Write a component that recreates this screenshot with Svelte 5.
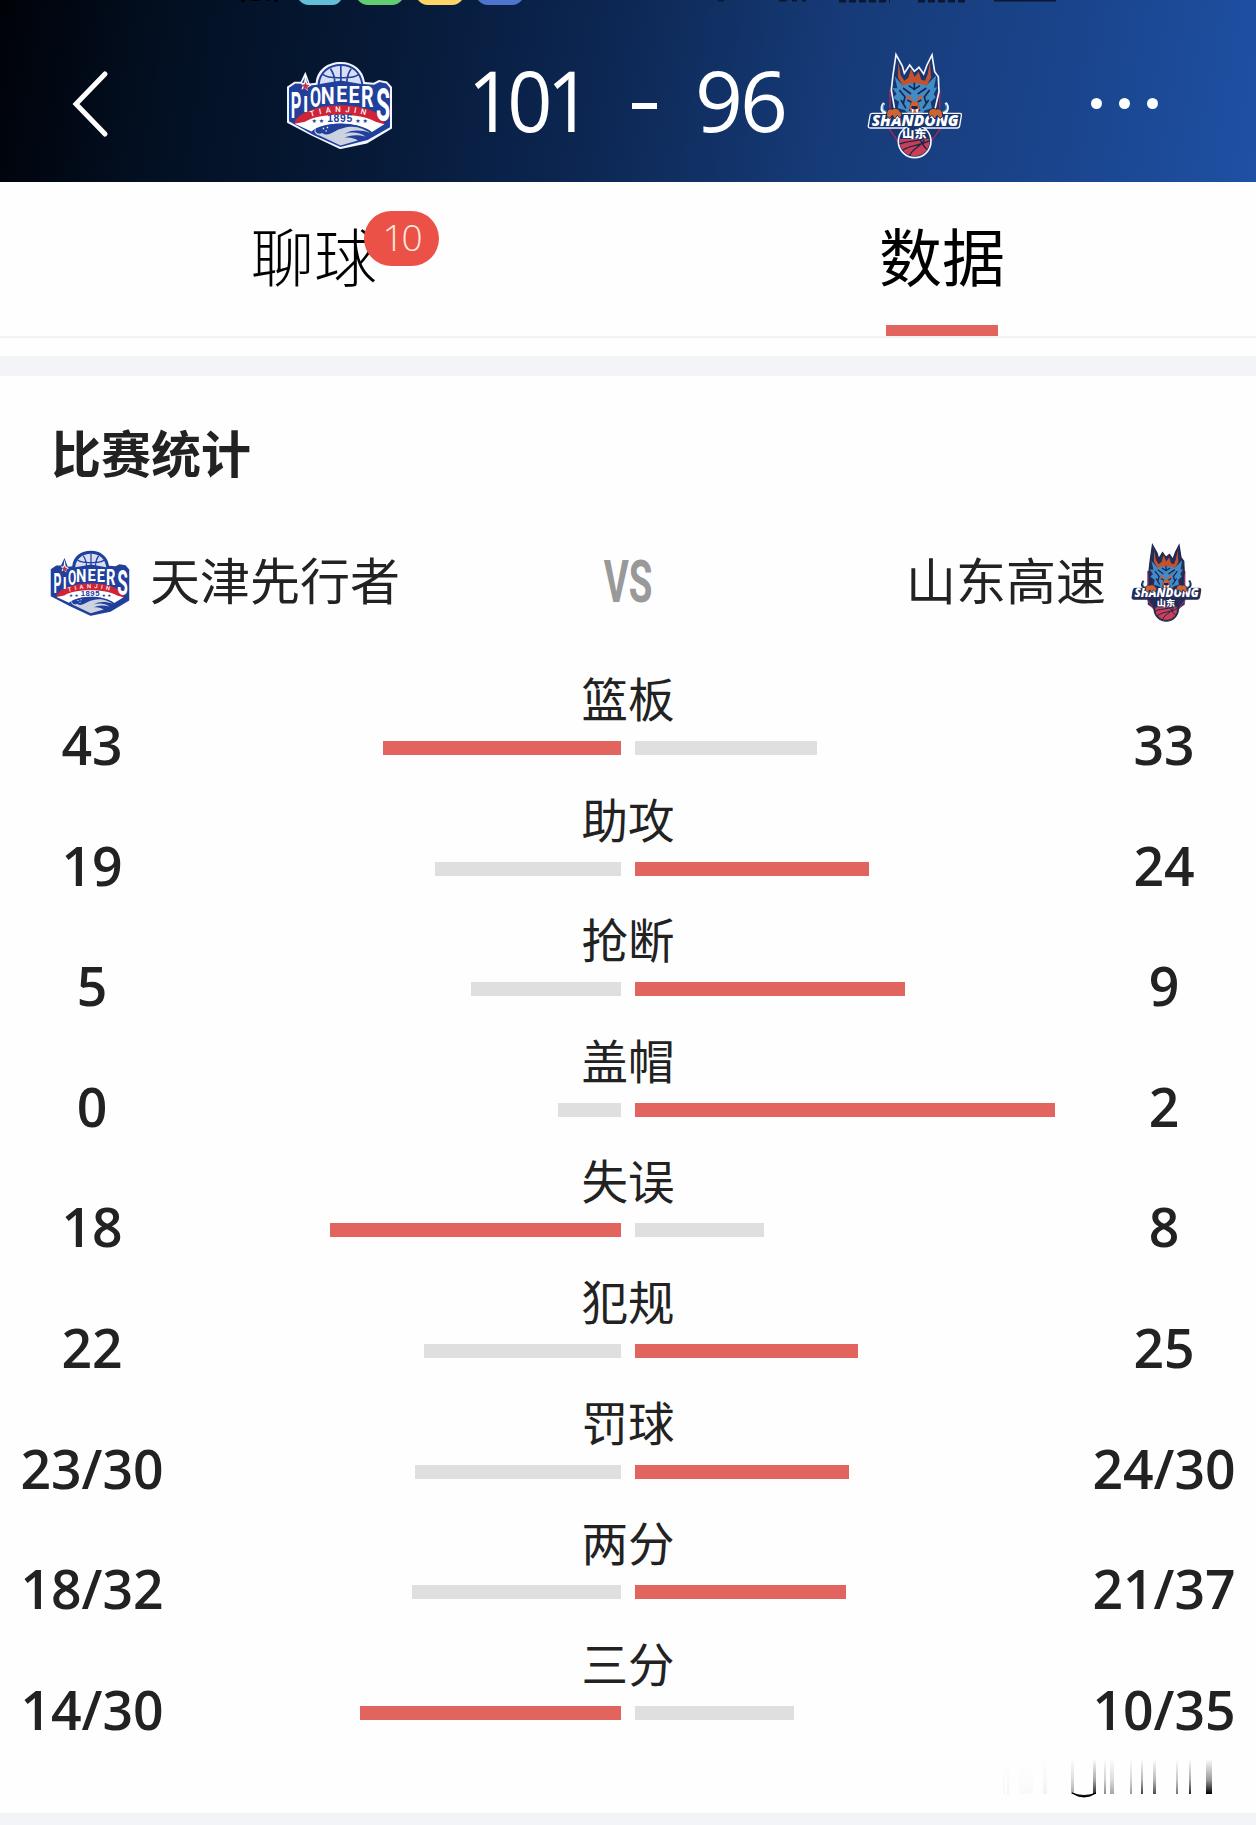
<script lang="ts">
    type Stat = {
        label: string;
        home: string;
        away: string;
    };

    // full length of a bar and the shortest one, in px
    const BAR = 420;
    const MIN_BAR = 63;

    const home = { name: '天津先行者', score: 101 };
    const away = { name: '山东高速', score: 96 };

    let activeTab = $state('stats');
    const tabs = [
        { id: 'chat', title: '聊球', badge: 10 },
        { id: 'stats', title: '数据', badge: 0 },
    ];

    const stats: Stat[] = [
        { label: '篮板', home: '43', away: '33' },
        { label: '助攻', home: '19', away: '24' },
        { label: '抢断', home: '5', away: '9' },
        { label: '盖帽', home: '0', away: '2' },
        { label: '失误', home: '18', away: '8' },
        { label: '犯规', home: '22', away: '25' },
        { label: '罚球', home: '23/30', away: '24/30' },
        { label: '两分', home: '18/32', away: '21/37' },
        { label: '三分', home: '14/30', away: '10/35' },
    ];

    // "made/attempted" becomes a ratio, plain counts stay as they are
    function toValue(text: string) {
        const [made, total] = text.split('/').map(Number);
        return total ? made / total : made;
    }

    function barWidth(own: string, other: string) {
        const a = toValue(own);
        const b = toValue(other);
        return Math.max(MIN_BAR, Math.round((a / (a + b)) * BAR));
    }

    // letter, x, baseline, horizontal and vertical scale in the arched name
    const arch: [string, number, number, number, number][] = [
        ['P', 62, 205, 1.0, 2.2],
        ['I', 99, 188, 1.1, 1.35],
        ['O', 120, 172, 0.98, 1.65],
        ['N', 152, 162, 1.2, 1.5],
        ['E', 198, 157, 1.2, 1.38],
        ['E', 235, 161, 1.2, 1.5],
        ['R', 272, 173, 1.2, 1.75],
        ['S', 317, 212, 1.4, 2.85],
    ];

    // x, width, opacity of the fading strokes in the corner
    const strokes = [
        [8, 2, 0.03], [12, 2, 0.04], [24, 14, 0.02], [48, 4, 0.05],
        [76, 3, 0.35], [98, 3, 0.85], [109, 2, 0.45], [115, 4, 0.35],
        [135, 2, 0.4], [146, 2, 0.75], [158, 3, 0.7], [181, 2, 0.55],
        [194, 2, 0.85], [211, 6, 1],
    ];
</script>

{#snippet pioneers(outline: string)}
    <svg class="crest" viewBox="48 34 320 266">
        <path
            d="M51 111 L73 96 L92 96 L106 66 L119 101 L137 99 C140 60 172 37 212 37 C251 37 279 61 284 97 L310 99 L326 91 L350 95 L365 112 V236 L290 281 L212 297 L209 297 L124 257 L51 219 Z"
            fill={outline}
        />
        <path
            d="M57 114 L76 101 L94 102 L106 80 L117 107 L142 105 C146 66 174 43 212 43 C248 43 274 65 279 103 L312 105 L328 97 L348 101 L359 115 V232 L292 270 L211 291 L130 255 L57 214 Z"
            fill="#20409c"
        />
        <path d="M149 103 C152 69 178 49 212 49 C245 49 269 69 273 103 L212 92 Z" fill="#d8def5" />
        <path
            d="M212 48 V95 M181 57 C190 70 194 80 194 100 M243 57 C233 70 230 80 230 100 M158 74 C174 86 194 84 212 84 C230 84 250 86 266 74"
            fill="none"
            stroke="#20409c"
            stroke-width="5"
        />
        <path d="M75 213 C115 151 309 151 342 213 V225 L311 222 C270 190 152 190 107 222 L75 224 Z" fill="#cf2438" />
        <path d="M74 222 L105 216 C145 188 272 188 316 216 L342 223 L305 246 C260 214 158 214 124 245 Z" fill="#fff" />
        <path d="M126 246 C166 213 258 213 302 245 L285 267 L211 286 L142 256 Z" fill="#20409c" />
        <path
            d="M139 232 C129 247 147 256 156 249 C177 263 189 241 218 235 C257 224 280 238 300 249 C271 239 243 239 222 252 C246 244 271 249 286 260 C260 253 238 255 222 264 C239 261 254 266 263 272 L211 287 L148 257 C132 252 129 241 139 232 Z"
            fill="#cdd2e1"
        />
        <path d="M158 236 h4 M170 233 h4 M166 243 h4" stroke="#fff" stroke-width="4" />
        {#each arch as [letter, x, y, sx, sy]}
            <text class="arch" transform="translate({x} {y}) scale({sx} {sy})">{letter}</text>
        {/each}
        <path d="M106 72 L111 99 L124 107 L113 113 L113 124 L105 116 L94 119 L98 108 L91 100 L102 99 Z" fill="#fff" />
        <path d="M107 97 L110 105 L119 106 L112 112 L114 121 L106 116 L98 120 L101 111 L94 105 L103 104 Z" fill="#c2304d" />
        <path id="ribbon" d="M122 201 Q211 172 304 201" fill="none" />
        <text class="city"><textPath href="#ribbon">TIANJIN</textPath></text>
        <text class="year" x="171" y="216">1895</text>
        <text class="star" x="124" y="220">★★</text>
        <text class="star" x="255" y="220">★★</text>
    </svg>
{/snippet}

{#snippet shandong(outline: string, body: string)}
    <svg class="crest" viewBox="52 36 288 322">
        <path d="M120 150 H270 V285 L195 340 L120 285 Z" fill={body} />
        <path d="M121 150 V270 L150 312 M270 150 V270 L238 312" fill="none" stroke="#8e2d62" stroke-width="5" />
        <path
            d="M125 150 L130 105 L139 44 L158 78 L164 100 L180 75 L194 94 L208 82 L222 102 L232 75 L247 45 L255 95 L266 110 L268 155 L252 225 H138 Z"
            fill={body}
            stroke={outline}
            stroke-width="5"
            stroke-linejoin="miter"
        />
        <path
            d="M146 66 L153 105 L164 122 L176 113 L184 86 L195 111 L207 95 L215 119 L226 122 L234 103 L241 66 L244 113 L228 142 H162 L145 112 Z"
            fill="#c4532d"
        />
        <path
            d="M135 109 L160 137 L181 130 H207 L229 137 L260 106 L253 143 L263 142 L252 162 L258 172 L243 186 L247 205 L226 211 L211 228 H181 L165 210 L144 205 L148 185 L130 173 L141 162 L128 144 L143 145 Z"
            fill="#418bc7"
        />
        <path
            d="M160 144 L184 162 M230 144 L204 162 M177 137 L194 148 L211 137 M194 128 V151 M149 150 L166 171 L161 191 M240 150 L224 171 L230 191 M173 180 L186 187 L180 213 M215 180 L202 187 L210 213 M154 180 L169 205 M237 180 L220 205"
            fill="none"
            stroke="#17264f"
            stroke-width="5"
        />
        <path d="M169 165 L188 174 L184 181 L172 175 Z M220 165 L201 174 L205 181 L217 175 Z M187 184 H203 L211 205 L202 222 H188 L178 205 Z" fill="#d15d30" />
        <path d="M186 198 H203 L207 213 L195 207 L183 213 Z" fill="#17264f" />
        <path d="M103 189 C89 208 99 222 122 220 M288 188 C302 208 289 222 270 220" fill="none" stroke={outline} stroke-width="8" />
        <path d="M103 194 C96 208 105 217 122 215 M288 194 C295 208 286 217 270 215" fill="none" stroke="#418bc7" stroke-width="4" />
        <path
            d="M68 220 H331 Q336 220 335 227 L330 257 Q329 264 322 264 H62 Q55 264 56 257 L61 227 Q62 220 68 220 Z"
            fill={body}
            stroke={outline}
            stroke-width="4"
        />
        <circle cx="195" cy="304" r="49" fill={body} stroke={outline} stroke-width="5" />
        <path d="M66 222 H326 L322 261 H62 Z" fill={body} />
        <path d="M151 297 H239 C243 327 221 348 195 348 C169 348 147 327 151 297 Z" fill="#c93f55" />
        <path
            d="M150 312 C178 300 211 306 232 290 M159 331 C177 315 211 318 239 302 M180 347 C190 322 212 323 225 299 M211 298 C219 314 225 323 232 328"
            fill="none"
            stroke="#17264f"
            stroke-width="4"
        />
        <text class="wordmark" x="66" y="257" textLength="261" lengthAdjust="spacingAndGlyphs">SHANDONG</text>
        <path
            d="M111 228 C109 211 119 203 128 208 C137 201 148 207 151 215 C159 218 157 229 150 234 L143 226 L135 237 L128 226 L119 236 Z M237 216 C241 206 251 202 259 208 C270 202 280 212 279 229 L271 236 L263 226 L256 237 L247 226 L239 233 Z"
            fill="#ce6431"
            stroke="#17264f"
            stroke-width="3"
        />
        <path d="M184 205 L189 220 L193 209 M197 209 L203 221 L207 205" fill="#fff" />
        <text class="wordmark-cn" x="157" y="293" textLength="74" lengthAdjust="spacingAndGlyphs">山东</text>
    </svg>
{/snippet}

<div class="page">
    <header class="header">
        <svg class="status" width="1256" height="6" viewBox="0 0 1256 6">
            <path d="M299 0 Q303 5 309 5 H332 Q338 5 341 0 Z" fill="#62bfd9" />
            <path d="M358 0 Q362 5 368 5 H392 Q398 5 402 0 Z" fill="#62cc73" />
            <path d="M418 0 Q422 5 428 5 H452 Q458 5 462 0 Z" fill="#ffd666" />
            <path d="M478 0 Q482 5 488 5 H512 Q518 5 522 0 Z" fill="#4f74ce" />
            <path d="M241 1 h4 M251 0 h9 M267 0 h3 M274 1 h4" stroke="#000208" stroke-width="2" />
            <path d="M718 0 h6 M779 0 h8 M792 0 h5 M802 0 h4 M994 0 H1056" stroke="#0d1730" stroke-width="3" />
            <path d="M839 1 H890 M918 1 H968" stroke="#0d1730" stroke-width="3" stroke-dasharray="7 3" />
        </svg>
        <button class="back" aria-label="返回">
            <svg width="40" height="68" viewBox="0 0 40 68">
                <path d="M34 4 L5 34 L34 64" fill="none" stroke="#fff" stroke-width="5" stroke-linecap="round" />
            </svg>
        </button>
        <div class="team-logo">{@render pioneers('#f4f6ff')}</div>
        <div class="score">
            <span class="home-score">{home.score}</span>
            <span class="dash"></span>
            <span>{away.score}</span>
        </div>
        <div class="team-logo away-logo">{@render shandong('#f4f6ff', '#17356f')}</div>
        <button class="more" aria-label="更多"><i></i><i></i><i></i></button>
    </header>

    <nav class="tabs">
        {#each tabs as tab}
            <button class="tab" class:active={activeTab === tab.id} onclick={() => (activeTab = tab.id)}>
                <span class="tab-title">
                    {tab.title}
                    {#if tab.badge}<span class="badge">{tab.badge}</span>{/if}
                </span>
            </button>
        {/each}
    </nav>

    <main class="panel">
        <h2>比赛统计</h2>
        <div class="versus">
            <div class="team">
                <div class="small-logo">{@render pioneers('#20409c')}</div>
                <span>{home.name}</span>
            </div>
            <span class="vs">VS</span>
            <div class="team right">
                <span>{away.name}</span>
                <div class="small-logo away-small">{@render shandong('#20284f', '#252d59')}</div>
            </div>
        </div>

        <div class="stats">
            {#each stats as stat}
                {@const left = toValue(stat.home)}
                {@const right = toValue(stat.away)}
                <div class="stat">
                    <span class="value">{stat.home}</span>
                    <div class="middle">
                        <span class="label">{stat.label}</span>
                        <div class="bars">
                            <div class="side left">
                                <div class="bar" class:lead={left > right} style:width={`${barWidth(stat.home, stat.away)}px`}></div>
                            </div>
                            <div class="side">
                                <div class="bar" class:lead={right > left} style:width={`${barWidth(stat.away, stat.home)}px`}></div>
                            </div>
                        </div>
                    </div>
                    <span class="value">{stat.away}</span>
                </div>
            {/each}
        </div>

        <svg class="fade" width="240" height="42" viewBox="0 0 240 42">
            <defs>
                <linearGradient id="fade" x1="0" y1="0" x2="0" y2="1">
                    <stop offset="0" stop-color="#000" stop-opacity="0" />
                    <stop offset="0.6" stop-color="#000" stop-opacity="0.4" />
                    <stop offset="1" stop-color="#000" />
                </linearGradient>
            </defs>
            {#each strokes as [x, width, opacity]}
                <rect {x} y="0" {width} height="35" fill="url(#fade)" {opacity} />
            {/each}
            <path d="M77 34 Q89 42 101 34 Q89 39 77 34 Z" fill="#000" stroke="#000" stroke-width="1" />
        </svg>
    </main>
</div>

<style>
:global(body) {
    margin: 0;
    background: #fefefe;
}
.page {
    display: flex;
    flex-direction: column;
    width: 1256px;
    height: 1825px;
    overflow: hidden;
    background: #fefefe;
    color: #222;
    font-family: "Open Sans", "Noto Sans CJK SC", sans-serif;
}
button {
    padding: 0;
    border: 0;
    background: none;
    color: inherit;
    font: inherit;
}
.crest {
    display: block;
    width: 100%;
}

.header {
    position: relative;
    display: flex;
    align-items: center;
    box-sizing: border-box;
    height: 182px;
    padding: 25px 0 0 71px;
    background: linear-gradient(100deg, #000208 0%, #031023 14%, #061936 30%, #0d2855 49%, #163b78 66%, #1a448b 83%, #1e50a4 100%);
    color: #fff;
}
.status {
    position: absolute;
    left: 0;
    top: 0;
}
.back {
    width: 40px;
    height: 68px;
    margin-right: 175px;
}
.team-logo {
    width: 107px;
    margin-top: 4px;
}
.away-logo {
    width: 96px;
    margin-left: 81px;
}
.score {
    display: grid;
    grid-template-columns: 134px 100px 92px;
    align-items: center;
    justify-items: center;
    height: 100px;
    margin: -7px 0 0 67px;
    font-size: 84px;
    line-height: 100px;
    letter-spacing: -3px;
}
.home-score {
    letter-spacing: -6px;
    transform: scaleX(0.94);
}
.dash {
    width: 25px;
    height: 6px;
    margin-top: 11px;
    background: #fff;
}
.more {
    display: flex;
    gap: 17px;
    margin-left: 128px;
}
.more i {
    width: 11px;
    height: 11px;
    border-radius: 50%;
    background: #fff;
}

.tabs {
    display: flex;
    box-sizing: border-box;
    height: 156px;
    border-bottom: 2px solid #f3f3f4;
}
.tab {
    display: flex;
    flex: 1;
    flex-direction: column;
    align-items: center;
    color: #000;
    font-family: "Noto Sans CJK SC", sans-serif;
    font-size: 63px;
    font-weight: 300;
    line-height: 90px;
}
.tab-title {
    position: relative;
    margin-top: 27px;
}
.tab.active {
    font-weight: 400;
}
.tab.active::after {
    content: "";
    width: 112px;
    height: 11px;
    margin-top: 26px;
    background: #e2645f;
}
.badge {
    position: absolute;
    left: 113px;
    top: 2px;
    width: 75px;
    height: 55px;
    border-radius: 28px;
    background: #eb5146;
    color: #ffe9df;
    font-family: "Open Sans", sans-serif;
    font-size: 37px;
    font-weight: 300;
    line-height: 51px;
    letter-spacing: -2px;
    text-align: center;
}

.panel {
    position: relative;
    flex: 1;
    margin-top: 18px;
    border-top: 20px solid #f2f4f7;
    border-bottom: 12px solid #f2f4f7;
}
h2 {
    margin: 42px 0 0 51px;
    font-size: 50px;
    font-weight: 700;
    line-height: 72px;
}
.versus {
    display: grid;
    grid-template-columns: 1fr 80px 1fr;
    align-items: center;
    height: 80px;
    margin: 54px 54px 0 50px;
}
.team {
    display: flex;
    align-items: center;
    gap: 20px;
    font-family: "Noto Sans CJK SC", sans-serif;
    font-size: 50px;
    line-height: 72px;
}
.team span {
    margin-top: -12px;
}
.right {
    justify-content: flex-end;
    gap: 25px;
}
.small-logo {
    width: 80px;
    margin-top: -2px;
}
.away-small {
    width: 71px;
}
.vs {
    margin: -4px 0 0 4px;
    color: #999;
    font-family: Roboto, sans-serif;
    font-size: 60px;
    font-weight: 700;
    line-height: 80px;
    text-align: center;
    transform: scaleX(0.64);
}

.stats {
    margin-top: 37px;
}
.stat {
    display: grid;
    grid-template-columns: 184px 1fr 184px;
    height: 120.6px;
}
.value {
    padding-top: 48px;
    font-size: 53.5px;
    font-weight: 600;
    line-height: 72px;
    text-align: center;
}
.middle {
    display: flex;
    flex-direction: column;
    align-items: center;
}
.label {
    height: 80px;
    font-family: "Noto Sans CJK SC", sans-serif;
    font-size: 46.5px;
    line-height: 72px;
}
.bars {
    display: flex;
    gap: 14px;
}
.side {
    display: flex;
    width: 437px;
}
.side.left {
    justify-content: flex-end;
}
.bar {
    height: 14px;
    background: #dfdfdf;
}
.bar.lead {
    background: #e2645f;
}
.fade {
    position: absolute;
    left: 995px;
    bottom: 12px;
}

.arch {
    fill: #fff;
    font-family: Roboto, sans-serif;
    font-size: 49px;
    font-weight: 700;
}
.city {
    fill: #fff;
    font-family: Roboto, sans-serif;
    font-size: 23px;
    font-weight: 500;
    letter-spacing: 13px;
}
.year {
    fill: #20409c;
    font-family: "Liberation Sans", sans-serif;
    font-size: 31px;
    font-weight: 700;
    letter-spacing: 2px;
}
.star {
    fill: #20409c;
    font-family: "DejaVu Sans", sans-serif;
    font-size: 18px;
    letter-spacing: 6px;
}
.wordmark {
    fill: #fff;
    font-family: "Open Sans", sans-serif;
    font-size: 46px;
    font-style: italic;
    font-weight: 800;
}
.wordmark-cn {
    fill: #fff;
    font-family: "Noto Sans CJK SC", sans-serif;
    font-size: 33px;
    font-weight: 900;
}
</style>
